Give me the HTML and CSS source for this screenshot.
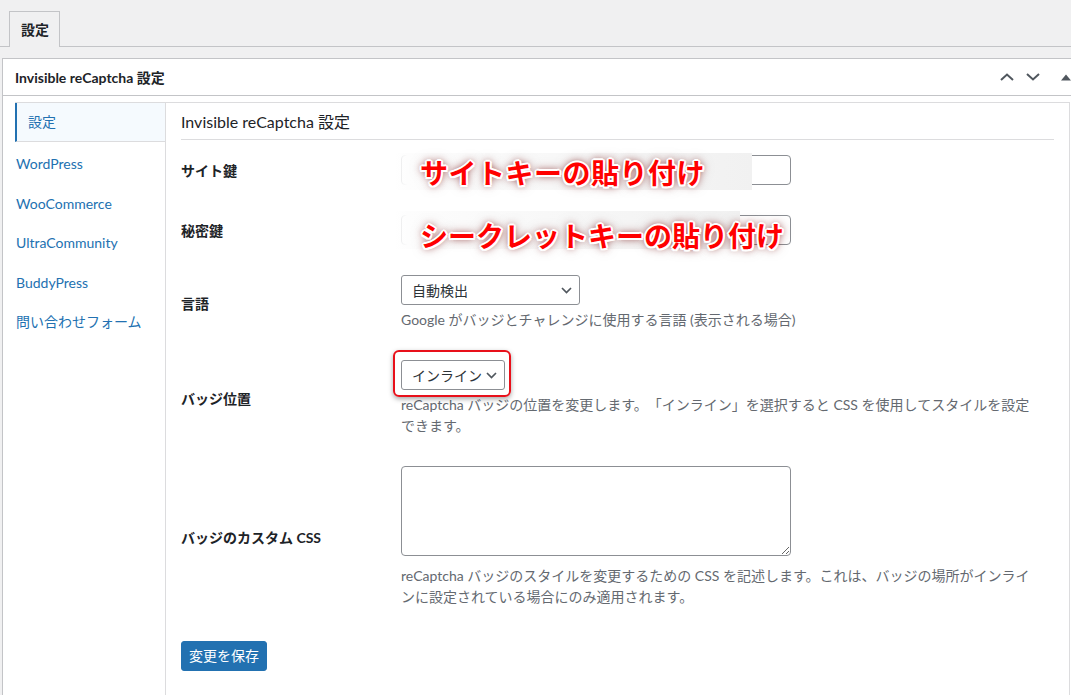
FILE: index.html
```html
<!DOCTYPE html>
<html lang="ja">
<head>
<meta charset="utf-8">
<title>Invisible reCaptcha 設定</title>
<link rel="stylesheet" href="styles.css">
</head>
<body>
<div class="tab-bar">
  <span class="tab tab-active">設定</span>
</div>

<div class="postbox">
  <div class="postbox-header">
    <h2 class="postbox-title">Invisible reCaptcha 設定</h2>
    <div class="postbox-controls">
      <span class="ctrl"><svg width="14" height="8" viewBox="0 0 14 8"><path d="M1 7 L7 1.5 L13 7" fill="none" stroke="#50575e" stroke-width="2"/></svg></span>
      <span class="ctrl"><svg width="14" height="8" viewBox="0 0 14 8"><path d="M1 1 L7 6.5 L13 1" fill="none" stroke="#50575e" stroke-width="2"/></svg></span>
      <span class="ctrl ctrl-last"><svg width="10" height="7" viewBox="0 0 10 7"><path d="M0 6.5 L5 0.5 L10 6.5 Z" fill="#50575e"/></svg></span>
    </div>
  </div>
  <div class="inside">
    <div class="ir-wrap">
      <nav class="ir-nav">
        <a class="nav-item nav-active">設定</a>
        <a class="nav-item">WordPress</a>
        <a class="nav-item">WooCommerce</a>
        <a class="nav-item">UltraCommunity</a>
        <a class="nav-item">BuddyPress</a>
        <a class="nav-item">問い合わせフォーム</a>
      </nav>
      <main class="ir-content">
        <h3 class="content-title">Invisible reCaptcha 設定</h3>
        <table class="form-table">
          <tr class="row-1">
            <th>サイト鍵</th>
            <td>
              <div class="field">
                <input class="text-input" type="text">
                <div class="note note-1"><span class="note-text">サイトキーの貼り付け</span></div>
              </div>
            </td>
          </tr>
          <tr class="row-2">
            <th>秘密鍵</th>
            <td>
              <div class="field">
                <input class="text-input" type="text">
                <div class="note note-2"><span class="note-text">シークレットキーの貼り付け</span></div>
              </div>
            </td>
          </tr>
          <tr>
            <th>言語</th>
            <td>
              <div class="field">
                <div class="select select-lang"><span>自動検出</span><svg width="11" height="7" viewBox="0 0 11 7"><path d="M1 1 L5.5 5.5 L10 1" fill="none" stroke="#50575e" stroke-width="1.7"/></svg></div>
              </div>
              <p class="description">Google がバッジとチャレンジに使用する言語 (表示される場合)</p>
            </td>
          </tr>
          <tr>
            <th>バッジ位置</th>
            <td>
              <div class="field">
                <div class="select select-pos"><span>インライン</span><svg width="11" height="7" viewBox="0 0 11 7"><path d="M1 1 L5.5 5.5 L10 1" fill="none" stroke="#50575e" stroke-width="1.7"/></svg></div>
                <div class="highlight"></div>
              </div>
              <p class="description">reCaptcha バッジの位置を変更します。「インライン」を選択すると CSS を使用してスタイルを設定できます。</p>
            </td>
          </tr>
          <tr>
            <th>バッジのカスタム CSS</th>
            <td>
              <textarea class="textarea"></textarea>
              <p class="description desc-ta">reCaptcha バッジのスタイルを変更するための CSS を記述します。これは、バッジの場所がインラインに設定されている場合にのみ適用されます。</p>
            </td>
          </tr>
        </table>
        <button class="button-primary" type="button">変更を保存</button>
      </main>
    </div>
  </div>
</div>
</body>
</html>
```

FILE: styles.css
```css
html, body {
  margin: 0;
  padding: 0;
}
body {
  background: #f0f0f1;
  font-family: "Lato", "Noto Sans CJK JP", sans-serif;
  font-size: 14px;
  color: #1d2327;
  overflow: hidden;
  height: 695px;
  text-spacing-trim: space-all;
}

.tab-bar {
  padding: 11px 0 0 9px;
  border-bottom: 1px solid #c3c4c7;
  display: flex;
  height: 35px;
  box-sizing: content-box;
}
.tab {
  display: block;
  border: 1px solid #c3c4c7;
  border-bottom: none;
  background: #f0f0f1;
  padding: 0 10px 0 11px;
  height: 35px;
  line-height: 35px;
  font-weight: 700;
  font-size: 14px;
  color: #1d2327;
}

.postbox {
  margin: 11px -12px 0 2px;
  background: #fff;
  border: 1px solid #c3c4c7;
  border-bottom: none;
  height: 636px;
  display: flex;
  flex-direction: column;
}
.postbox-header {
  display: flex;
  align-items: center;
  justify-content: space-between;
  height: 36px;
  flex: none;
  border-bottom: 1px solid #c3c4c7;
  padding: 0 3px 0 12px;
}
.postbox-title {
  margin: 0;
  font-size: 14px;
  font-weight: 700;
  color: #1d2327;
}
.postbox-controls {
  display: flex;
  align-items: center;
}
.ctrl {
  width: 26px;
  height: 36px;
  display: flex;
  align-items: center;
  justify-content: center;
}
.ctrl-last {
  margin-left: 7px;
}

.inside {
  flex: 1;
  display: flex;
  flex-direction: column;
  padding: 6px 12px 0 12px;
}
.ir-wrap {
  flex: 1;
  display: flex;
  border-top: 1px solid #dcdcde;
  border-right: 1px solid #dcdcde;
}
.ir-nav {
  width: 150px;
  flex: none;
  border-right: 1px solid #dcdcde;
  display: flex;
  flex-direction: column;
}
.nav-item {
  display: block;
  height: 39.5px;
  line-height: 39.5px;
  padding-left: 1px;
  color: #2271b1;
  font-size: 14px;
  text-decoration: none;
}
.nav-active {
  height: 38px;
  line-height: 38px;
  border-left: 2px solid #2271b1;
  border-bottom: 1px solid #dcdcde;
  background: #f5fafe;
  padding-left: 11px;
  color: #2271b1;
  margin-bottom: 2px;
}

.ir-content {
  flex: 1;
  padding: 0 15px;
}
.content-title {
  margin: 0;
  padding: 7px 0 5px;
  line-height: 24px;
  font-size: 16px;
  font-weight: 400;
  color: #1d2327;
  border-bottom: 1px solid #dcdcde;
}

.form-table {
  border-collapse: collapse;
  width: 100%;
}
.form-table th {
  width: 200px;
  padding: 0 10px 0 0;
  text-align: left;
  vertical-align: middle;
  font-weight: 700;
  font-size: 14px;
  color: #1d2327;
}
.form-table td {
  padding: 15px 10px;
  vertical-align: top;
}
.field {
  position: relative;
}
.text-input {
  display: block;
  box-sizing: border-box;
  width: 390px;
  height: 30px;
  border: 1px solid #8c8f94;
  border-radius: 4px;
  margin: 0;
  background: #fff;
}

.note {
  position: absolute;
  display: flex;
  align-items: center;
  background: linear-gradient(to right, rgba(255,255,255,0.7) 0, #fdfdfd 12px, #f6f6f6 60%, #f1f1f1 100%);
  white-space: nowrap;
}
.note-1 {
  left: -6px;
  top: -2px;
  width: 357px;
  height: 37px;
}
.note-2 {
  left: -6px;
  top: -4px;
  width: 345px;
  height: 38px;
}
.note-text {
  padding-left: 25px;
  font-family: "Noto Sans CJK JP", sans-serif;
  font-weight: 700;
  font-size: 28px;
  line-height: 1;
  color: #ff0000;
  letter-spacing: 0.5px;
  text-shadow:
    2px 0 0 #fff, -2px 0 0 #fff, 0 2px 0 #fff, 0 -2px 0 #fff,
    1.5px 1.5px 0 #fff, -1.5px 1.5px 0 #fff, 1.5px -1.5px 0 #fff, -1.5px -1.5px 0 #fff,
    0 0 7px rgba(110, 0, 0, 0.75), 0 0 12px rgba(110, 0, 0, 0.5);
}
.note-2 .note-text {
  padding-top: 10px;
  letter-spacing: 0;
}

.select {
  box-sizing: border-box;
  height: 30px;
  border: 1px solid #8c8f94;
  border-radius: 3px;
  display: flex;
  align-items: center;
  justify-content: space-between;
  padding: 0 7px 0 10px;
  font-size: 14px;
  color: #2c3338;
  background: #fff;
}
.select-lang {
  width: 179px;
}
.select-pos {
  width: 104px;
}
.highlight {
  position: absolute;
  left: -8px;
  top: -10px;
  width: 118px;
  height: 47px;
  box-sizing: border-box;
  border: 2px solid #e8101a;
  border-radius: 6px;
  box-shadow: 0 2px 5px rgba(0, 0, 0, 0.35);
}

.description {
  margin: 4px 0 0;
  max-width: 636px;
  line-height: 21px;
  font-size: 14px;
  color: #646970;
}
.desc-ta {
  margin-top: 9px;
}
.textarea {
  display: block;
  box-sizing: border-box;
  width: 390px;
  height: 90px;
  border: 1px solid #8c8f94;
  border-radius: 4px;
  margin: 0;
  background: #fff;
}

.button-primary {
  margin-top: 19px;
  height: 30px;
  padding: 0 7px;
  background: #2271b1;
  border: 1px solid #2271b1;
  border-radius: 3px;
  color: #fff;
  font-family: "Lato", "Noto Sans CJK JP", sans-serif;
  font-size: 14px;
  line-height: 28px;
}
```
